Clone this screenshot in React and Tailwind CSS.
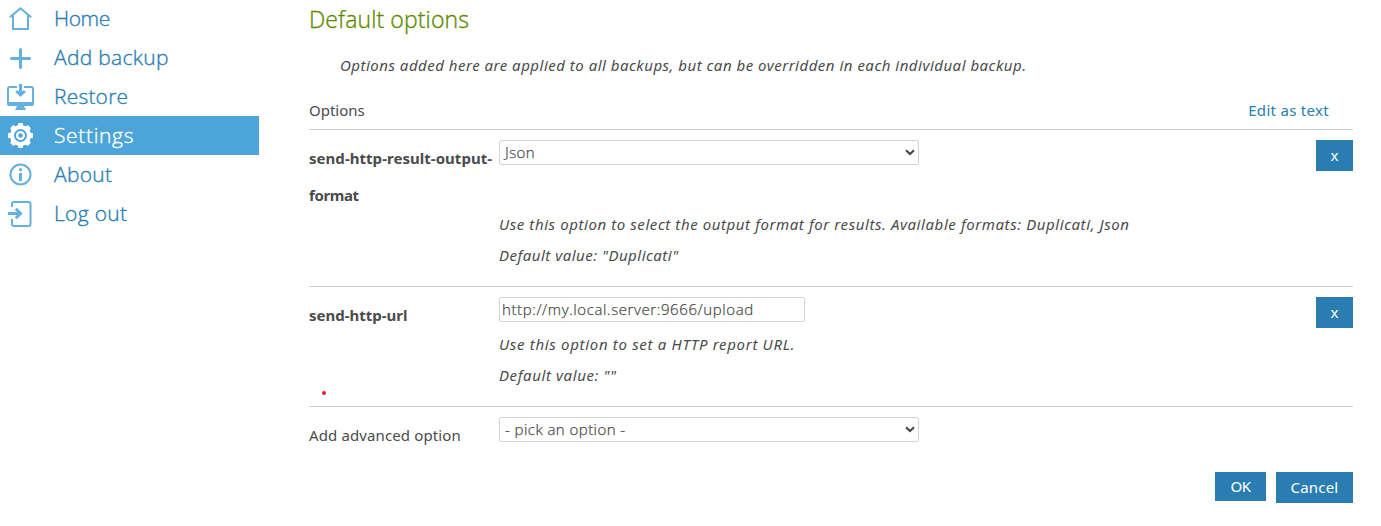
const Svg = ({ children, ...rest }) => (
  <svg width="27" height="27" viewBox="0 0 27 27" fill="none" stroke="currentColor" strokeWidth="2" {...rest}>
    {children}
  </svg>
);

const HomeIcon = () => (
  <Svg>
    <path d="M2.800 12.300 13.500 3.300 24.200 12.300M6 10.500V24H21V10.500" />
  </Svg>
);

const PlusIcon = () => (
  <Svg strokeWidth="3" strokeLinecap="round">
    <path d="M13.500 5.500v18M4.500 14.500h18" />
  </Svg>
);

const RestoreIcon = () => (
  <Svg>
    <path d="M10 4H3A2 2 0 0 0 1 6V20H26V6A2 2 0 0 0 24 4H17" />
    <path d="M0 19H27V21A2 2 0 0 1 25 23H2A2 2 0 0 1 0 21Z" fill="currentColor" stroke="none" />
    <path d="M10 23H17L19 27H8Z" fill="currentColor" stroke="none" />
    <path d="M13.500 1V11M9.200 8 13.500 12 17.800 8" strokeWidth="3" />
  </Svg>
);

const TEETH = [0, 45, 90, 135, 180, 225, 270, 315];
const GearIcon = () => (
  <Svg>
    <circle cx="13.500" cy="13.500" r="8.500" strokeWidth="4" />
    <circle cx="13.500" cy="13.500" r="3.400" strokeWidth="2.200" />
    {TEETH.map((a) => (
      <path key={a} d="M10.600 4.500 11.300 1H15.700L16.400 4.500Z" fill="currentColor" stroke="none" transform={`rotate(${a} 13.5 13.5)`} />
    ))}
  </Svg>
);

const InfoIcon = () => (
  <Svg>
    <circle cx="13.500" cy="13.500" r="10" />
    <path d="M13.500 12V20" strokeWidth="3" />
    <circle cx="13.500" cy="8.700" r="1.600" fill="currentColor" stroke="none" />
  </Svg>
);

const LogoutIcon = () => (
  <Svg>
    <path d="M5 7V4A2 2 0 0 1 7 2H21.500A2 2 0 0 1 23.500 4V24A2 2 0 0 1 21.500 26H7A2 2 0 0 1 5 24V19" />
    <path d="M1 13.500H13" strokeWidth="3" />
    <path d="M8.800 8.800 13.500 13.500 8.800 18.200" strokeWidth="3" />
  </Svg>
);

const NAV = [
  { label: "Home", Icon: HomeIcon, tracking: "tracking-[-0.4px]" },
  { label: "Add backup", Icon: PlusIcon, tracking: "tracking-[0.3px]" },
  { label: "Restore", Icon: RestoreIcon, tracking: "tracking-[0.2px]" },
  { label: "Settings", Icon: GearIcon, tracking: "tracking-[0.65px]", active: true },
  { label: "About", Icon: InfoIcon, tracking: "tracking-[0.3px]" },
  { label: "Log out", Icon: LogoutIcon, tracking: "tracking-[0.3px]" },
];

function Select({ value }) {
  return (
    <div className="flex h-[25px] w-[420px] items-center justify-between rounded-[2px] border border-[#d3d3d3] pr-[3px] pl-[5px] font-['Open_Sans',sans-serif] font-light tracking-[0.45px] text-[#4b4b4b] [-webkit-text-stroke:0.25px_currentColor]">
      <span>{value}</span>
      <svg width="10" height="7" viewBox="0 0 10 7" fill="none" stroke="#444" strokeWidth="2">
        <path d="M1 1.200 5 5 9 1.200" />
      </svg>
    </div>
  );
}

const Button = ({ className, children }) => (
  <button className={`flex items-center justify-center bg-[#297db1] text-white ${className}`}>{children}</button>
);

export default function App() {
  return (
    <div className="flex h-[526px] w-[1381px] overflow-hidden bg-white font-['Noto_Sans',sans-serif] text-[15px] text-[#4b4b4b]">
      <nav className="-mt-px w-[259px] shrink-0">
        {NAV.map(({ label, Icon, tracking, active }) => (
          <a
            key={label}
            className={`flex h-[39px] items-center font-['Open_Sans',sans-serif] text-[21px] font-light ${active ? "bg-[#4ca4d8] text-white" : "text-[#64b0df]"}`}
          >
            <span className="flex w-[54px] justify-start pl-[7px]">
              <Icon />
            </span>
            <span className={`[-webkit-text-stroke:0.35px_currentColor] ${tracking} ${active ? "" : "text-[#297db1]"}`}>{label}</span>
          </a>
        ))}
      </nav>
      <main className="ml-[50px] flex w-[1044px] flex-col">
        <h1 className="h-[38px] font-['Open_Sans',sans-serif] text-[23px] leading-[38px] font-light tracking-[0.12px] text-[#5f8a00] [-webkit-text-stroke:0.35px_currentColor]">Default options</h1>
        <p className="mt-[12px] h-[31px] pl-[31px] leading-[31px] tracking-[0.5px] italic">
          Options added here are applied to all backups, but can be overridden in each individual backup.
        </p>
        <div className="flex h-[49px] items-start justify-between border-b border-[#d0d0d0] pt-[14px] pr-[24px] leading-[30px]">
          <span>Options</span>
          <a className="tracking-[0.3px] text-[#297db1]">Edit as text</a>
        </div>
        <section className="flex h-[157px] items-start border-b border-[#d0d0d0] pt-[10px]">
          <h2 className="w-[190px] shrink-0 leading-[37px] font-bold whitespace-nowrap">
            <span className="tracking-[0.04px]">send-http-result-output-</span>
            <br />
            <span className="tracking-[-0.4px]">format</span>
          </h2>
          <div className="flex-1">
            <Select value="Json" />
            <div className="mt-[44px] leading-[31px] italic">
              <p className="tracking-[0.58px]">Use this option to select the output format for results. Available formats: Duplicati, Json</p>
              <p className="tracking-[0.5px]">Default value: "Duplicati"</p>
            </div>
          </div>
          <Button className="h-[31px] w-[37px]">x</Button>
        </section>
        <section className="flex h-[120px] items-start border-b border-[#d0d0d0] pt-[10px]">
          <div className="w-[190px] shrink-0">
            <h2 className="leading-[37px] font-bold">send-http-url</h2>
            <span className="mt-[57px] ml-[13px] block size-[4px] rounded-full bg-[#ed1c24]" />
          </div>
          <div className="flex-1">
            <div className="flex h-[25px] w-[306px] items-center rounded-[2px] border border-[#d3d3d3] pl-[2px] font-['Open_Sans',sans-serif] font-light tracking-[0.6px] text-[#4b4b4b] [-webkit-text-stroke:0.25px_currentColor]">
              <span>http://my.local.server:9666/upload</span>
            </div>
            <div className="mt-[7px] leading-[31px] italic">
              <p className="tracking-[0.68px]">Use this option to set a HTTP report URL.</p>
              <p className="tracking-[0.6px]">Default value: ""</p>
            </div>
          </div>
          <Button className="h-[31px] w-[37px]">x</Button>
        </section>
        <section className="flex h-[65px] items-start pt-[10px]">
          <span className="w-[190px] shrink-0 leading-[37px] tracking-[0.12px]">Add advanced option</span>
          <Select value="- pick an option -" />
        </section>
        <div className="flex items-start justify-end gap-[10px]">
          <Button className="h-[29px] w-[51px] tracking-[-0.4px]">OK</Button>
          <Button className="h-[31px] w-[77px] tracking-[0.2px]">Cancel</Button>
        </div>
      </main>
    </div>
  );
}
